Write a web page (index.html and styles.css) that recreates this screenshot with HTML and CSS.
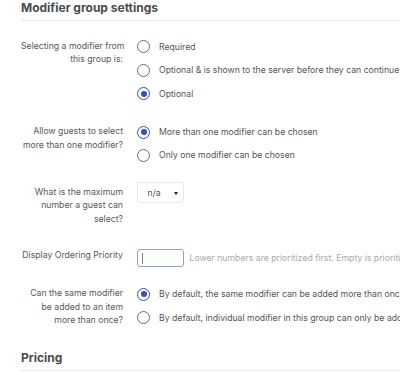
FILE: index.html
```html
<!DOCTYPE html>
<html>
<head>
<meta charset="utf-8">
<link rel="stylesheet" href="styles.css">
</head>
<body>
<div class="page">
  <h2 class="section-title">Modifier group settings</h2>

  <div class="row row-first">
    <div class="label label-radio">Selecting a modifier from<br>this group is:</div>
    <div class="control">
      <div class="opt"><span class="radio"></span><span>Required</span></div>
      <div class="opt"><span class="radio"></span><span>Optional &amp; is shown to the server before they can continue</span></div>
      <div class="opt"><span class="radio checked"></span><span>Optional</span></div>
    </div>
  </div>

  <div class="row row-guests">
    <div class="label label-radio2">Allow guests to select<br>more than one modifier?</div>
    <div class="control">
      <div class="opt opt-tight"><span class="radio checked"></span><span>More than one modifier can be chosen</span></div>
      <div class="opt opt-tight"><span class="radio"></span><span>Only one modifier can be chosen</span></div>
    </div>
  </div>

  <div class="row row-max">
    <div class="label label-select">What is the maximum<br>number a guest can<br>select?</div>
    <div class="control">
      <div class="select"><span class="select-text">n/a</span><span class="caret"></span></div>
    </div>
  </div>

  <div class="row row-priority">
    <div class="label label-input">Display Ordering Priority</div>
    <div class="control control-inline">
      <div class="input"><span class="cursor"></span></div>
      <span class="hint">Lower numbers are prioritized first. Empty is prioritized last.</span>
    </div>
  </div>

  <div class="row row-same">
    <div class="label label-radio">Can the same modifier<br>be added to an item<br>more than once?</div>
    <div class="control">
      <div class="opt"><span class="radio checked"></span><span>By default, the same modifier can be added more than once to an item</span></div>
      <div class="opt"><span class="radio"></span><span>By default, individual modifier in this group can only be added once</span></div>
    </div>
  </div>

  <h2 class="section-title pricing">Pricing</h2>
</div>
</body>
</html>
```

FILE: styles.css
```css
html, body {
  margin: 0;
  padding: 0;
  overflow: hidden;
  background: #ffffff;
}

body {
  width: 400px;
  height: 374px;
  font-family: Inter, "Noto Sans", sans-serif;
  font-size: 8.7px;
  color: #555555;
}

.page {
  padding-left: 21px;
  width: 800px;
}

.section-title {
  margin: 0;
  font-size: 12px;
  font-weight: 700;
  line-height: 16px;
  color: #4b4b4b;
  padding-bottom: 4px;
  border-bottom: 1px solid #ececec;
  white-space: nowrap;
}

.section-title.pricing {
  margin-top: 21px;
}

.row {
  display: grid;
  grid-template-columns: 102px 1fr;
  column-gap: 14px;
  align-items: start;
}

.row-first { margin-top: 14px; }
.row-guests { margin-top: 15px; }
.row-max { margin-top: 15px; }
.row-priority { margin-top: 23px; }
.row-same { margin-top: 15px; }

.label {
  text-align: right;
  line-height: 13.3px;
  white-space: nowrap;
  color: #585858;
}

.label-radio { padding-top: 5px; }
.label-radio2 { padding-top: 4.8px; }
.label-select { padding-top: 4.6px; }
.label-input { padding-top: 0.5px; }

.control {
  display: flex;
  flex-direction: column;
}

.control-inline {
  flex-direction: row;
  align-items: center;
}

.opt {
  display: flex;
  align-items: center;
  height: 23.5px;
  white-space: nowrap;
  color: #545454;
}

.opt-tight { height: 23px; }

.radio {
  box-sizing: border-box;
  width: 13px;
  height: 13px;
  border-radius: 50%;
  border: 1px solid #6c6c6c;
  margin-right: 9px;
  flex: none;
  display: flex;
  align-items: center;
  justify-content: center;
}

.radio.checked {
  border: 1.5px solid #2f50c6;
}

.radio.checked::after {
  content: "";
  width: 6px;
  height: 6px;
  border-radius: 50%;
  background: #2f50c6;
}

.select {
  box-sizing: border-box;
  width: 47px;
  height: 21.5px;
  border: 1px solid #e8e8e8;
  border-radius: 3px;
  display: flex;
  align-items: center;
  padding-left: 9.5px;
  padding-top: 2px;
  color: #555555;
}

.select-text {
  margin-right: 13px;
}

.caret {
  width: 0;
  height: 0;
  border-left: 2.5px solid transparent;
  border-right: 2.5px solid transparent;
  border-top: 3px solid #222222;
}

.input {
  box-sizing: border-box;
  width: 47px;
  height: 18.5px;
  border: 1px solid #8fa3dd;
  border-radius: 3px;
  display: flex;
  align-items: center;
  padding-left: 3.7px;
  flex: none;
}

.cursor {
  width: 1px;
  height: 11px;
  background: #7a7a7a;
}

.hint {
  margin-left: 5.5px;
  color: #a9a9a9;
  white-space: nowrap;
}
```
